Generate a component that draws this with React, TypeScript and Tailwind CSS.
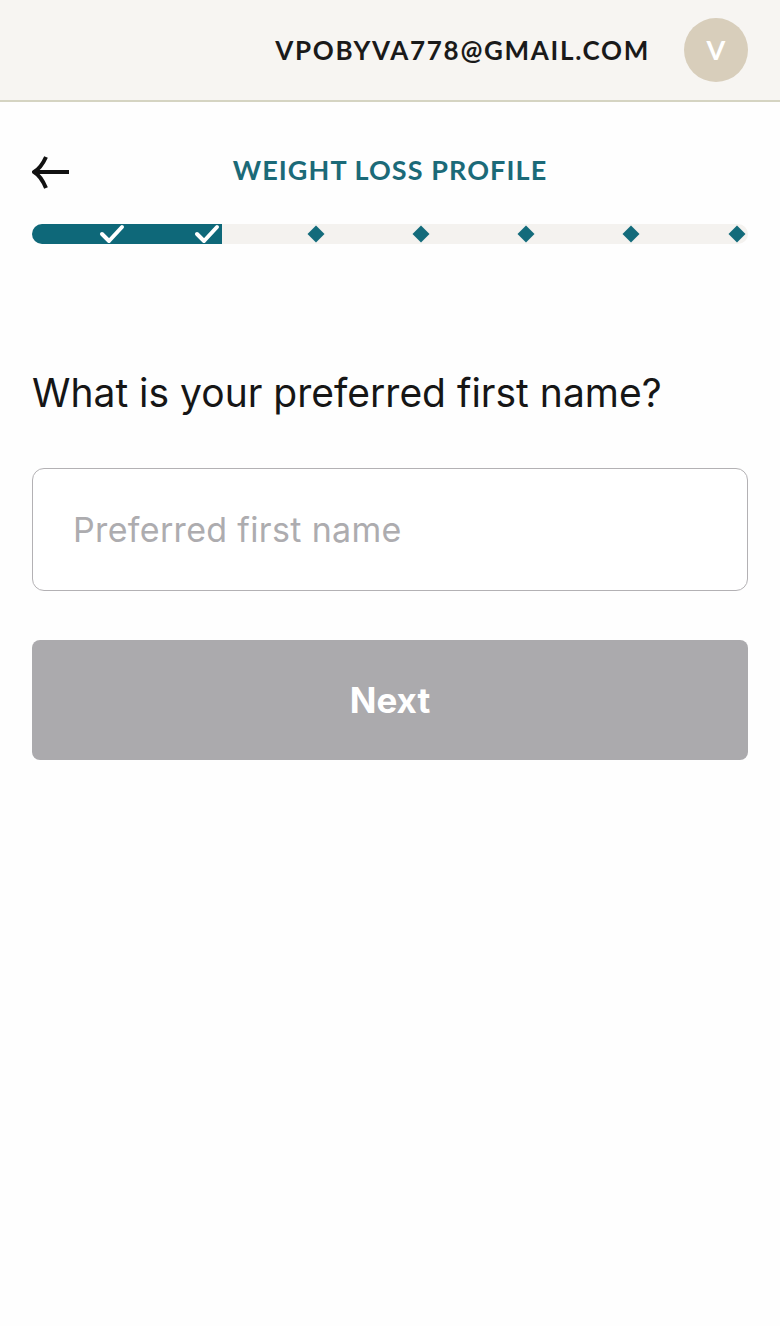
import React from 'react';

const steps = [
  { x: 112, done: true },
  { x: 207, done: true },
  { x: 316, done: false },
  { x: 421, done: false },
  { x: 526, done: false },
  { x: 631, done: false },
  { x: 737, done: false },
];

const BackArrow = () => (
  <svg width="38" height="34" viewBox="0 0 38 34" fill="none" stroke="#111" strokeWidth="4" strokeLinecap="butt">
    <path d="M2 17 H37" />
    <path d="M14 2 Q9 13 2 17 Q9 21 14 33" strokeLinejoin="round" />
  </svg>
);

const Check = () => (
  <svg width="26" height="20" viewBox="0 0 26 20" fill="none" stroke="#fff" strokeWidth="4" strokeLinecap="round" strokeLinejoin="round">
    <path d="M3 10 L10 17 L23 3" />
  </svg>
);

const App: React.FC = () => {
  return (
    <div className="min-h-screen w-full bg-[#fefefe]" style={{ fontFamily: 'Lato, "Open Sans", sans-serif' }}>
      {/* Header */}
      <header className="h-[102px] bg-[#f7f5f2] border-b-2 border-[#d5d4c2] flex items-center justify-end pr-[32px] gap-[34px]">
        <span className="text-[26px] font-bold tracking-[0.065em] text-[#1a1a1a]">VPOBYVA778@GMAIL.COM</span>
        <div className="w-[64px] h-[64px] rounded-full bg-[#d8cebb] flex items-center justify-center text-white text-[27px] font-bold">
          V
        </div>
      </header>

      <main className="px-[32px]">
        {/* Title row */}
        <div className="relative h-[120px] flex items-center justify-center pt-[16px]">
          <button className="absolute left-0 top-[53px] bg-transparent border-none p-0">
            <BackArrow />
          </button>
          <h1 className="text-[27px] font-bold tracking-[0.04em] text-[#1b6a78]">WEIGHT LOSS PROFILE</h1>
        </div>

        {/* Progress */}
        <div className="relative h-[20px] rounded-full bg-[#f4f2ef] mt-[2px]">
          <div className="absolute left-0 top-0 h-full w-[190px] rounded-l-full rounded-r-[3px] bg-[#0e6879]" />
          {steps.map((s, i) =>
            s.done ? (
              <div key={i} className="absolute top-0 -translate-x-1/2" style={{ left: s.x - 32 }}>
                <Check />
              </div>
            ) : (
              <div
                key={i}
                className="absolute top-[4px] w-[12px] h-[12px] rotate-45 bg-[#136b7b] -translate-x-1/2"
                style={{ left: s.x - 32 }}
              />
            )
          )}
        </div>

        {/* Question */}
        <h2 className="mt-[124px] text-[39px] leading-[50px] text-[#161616] font-normal" style={{ fontFamily: 'Inter, sans-serif' }}>
          What is your preferred first name?
        </h2>

        <input
          type="text"
          placeholder="Preferred first name"
          className="mt-[50px] w-full h-[123px] rounded-[12px] border-[1.5px] border-[#b3b1b4] px-[40px] text-[34px] tracking-[0.01em] text-[#161616] placeholder:text-[#adacaf] outline-none bg-white"
          style={{ fontFamily: 'Inter, sans-serif' }}
        />

        <button className="mt-[49px] w-full h-[120px] rounded-[8px] bg-[#abaaad] text-white text-[35px] font-bold" style={{ fontFamily: 'Inter, sans-serif' }}>
          Next
        </button>
      </main>
    </div>
  );
};

export default App;
